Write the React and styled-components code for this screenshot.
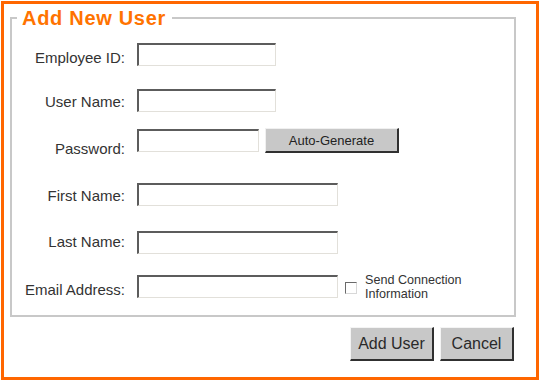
import React from 'react';
import styled, { createGlobalStyle } from 'styled-components';

const GlobalStyle = createGlobalStyle`
  html, body {
    margin: 0;
    padding: 0;
    background: #ffffff;
  }

  body {
    font-family: 'Liberation Sans', Arial, sans-serif;
  }
`;

const Frame = styled.div`
  box-sizing: border-box;
  width: 538px;
  height: 379px;
  margin: 1px;
  border: 3px solid #ff6600;
  padding: 3px 20px 0 6px;
  display: flex;
  flex-direction: column;
`;

const Group = styled.fieldset`
  margin: 0;
  padding: 0 0 14px 5px;
  border: 2px solid #c8c8c8;
  min-width: 0;
`;

const Legend = styled.legend`
  padding: 0 6px 0 5px;
  color: #ff7300;
  font-size: 20px;
  line-height: 22px;
  font-weight: bold;
  letter-spacing: 0.7px;
`;

const Rows = styled.div`
  display: flex;
  flex-direction: column;
  margin-left: -5px;
`;

const Row = styled.div`
  display: grid;
  grid-template-columns: 113px 1fr;
  column-gap: 12px;
  align-items: end;
  margin-top: ${(props) => props.$gap}px;
`;

const Label = styled.label`
  text-align: right;
  font-size: 15px;
  line-height: 17px;
  color: #333333;
  margin-bottom: ${(props) => props.$lift || 0}px;
`;

const Field = styled.div`
  display: flex;
  align-items: center;
`;

const TextInput = styled.input`
  box-sizing: border-box;
  width: ${(props) => props.$width}px;
  height: 23px;
  margin: 0;
  padding: 0 3px;
  background: #ffffff;
  border-style: solid;
  border-width: 2px 1px 1px 2px;
  border-color: #5c5c5c #e2e0da #e2e0da #5c5c5c;
  outline: none;
`;

const SmallButton = styled.button`
  box-sizing: border-box;
  width: 134px;
  height: 25px;
  margin-left: 6px;
  padding: 0;
  background: #c8c8c8;
  border-style: solid;
  border-width: 1px 2px 2px 1px;
  border-color: #f0f0f0 #303030 #303030 #f0f0f0;
  font-family: 'Liberation Sans', Arial, sans-serif;
  font-size: 13px;
  color: #222222;
`;

const Check = styled.input`
  appearance: none;
  box-sizing: border-box;
  width: 12px;
  height: 12px;
  margin: 2px 8px 0 7px;
  background: #ffffff;
  border-style: solid;
  border-width: 1px;
  border-color: #6a6a6a #d8d8d8 #d8d8d8 #6a6a6a;
`;

const CheckText = styled.span`
  font-size: 12.6px;
  line-height: 14px;
  color: #333333;
  width: 112px;
  margin-top: 1px;
`;

const Actions = styled.div`
  display: flex;
  justify-content: flex-end;
  gap: 6px;
  margin-top: 10px;
  padding-right: 2px;
`;

const ActionButton = styled.button`
  box-sizing: border-box;
  width: ${(props) => props.$width}px;
  height: 34px;
  padding: 0;
  background: #c8c8c8;
  border-style: solid;
  border-width: 1px 2px 2px 1px;
  border-color: #f4f4f4 #303030 #303030 #f4f4f4;
  font-family: 'Liberation Sans', Arial, sans-serif;
  font-size: 16px;
  color: #2a2a2a;
`;

const App = () => {
  return (
    <>
      <GlobalStyle />
      <Frame>
        <Group>
          <Legend>Add New User</Legend>
          <Rows>
            <Row $gap={14}>
              <Label>Employee ID:</Label>
              <Field>
                <TextInput $width={139} />
              </Field>
            </Row>
            <Row $gap={23}>
              <Label $lift={2}>User Name:</Label>
              <Field>
                <TextInput $width={139} />
              </Field>
            </Row>
            <Row $gap={16}>
              <Label $lift={-4}>Password:</Label>
              <Field>
                <TextInput $width={122} type="password" />
                <SmallButton>Auto-Generate</SmallButton>
              </Field>
            </Row>
            <Row $gap={30}>
              <Label $lift={2}>First Name:</Label>
              <Field>
                <TextInput $width={201} />
              </Field>
            </Row>
            <Row $gap={25}>
              <Label $lift={4}>Last Name:</Label>
              <Field>
                <TextInput $width={201} />
              </Field>
            </Row>
            <Row $gap={18}>
              <Label $lift={3}>Email Address:</Label>
              <Field>
                <TextInput $width={201} />
                <Check type="checkbox" />
                <CheckText>Send Connection Information</CheckText>
              </Field>
            </Row>
          </Rows>
        </Group>
        <Actions>
          <ActionButton $width={84}>Add User</ActionButton>
          <ActionButton $width={74}>Cancel</ActionButton>
        </Actions>
      </Frame>
    </>
  );
};

export default App;
